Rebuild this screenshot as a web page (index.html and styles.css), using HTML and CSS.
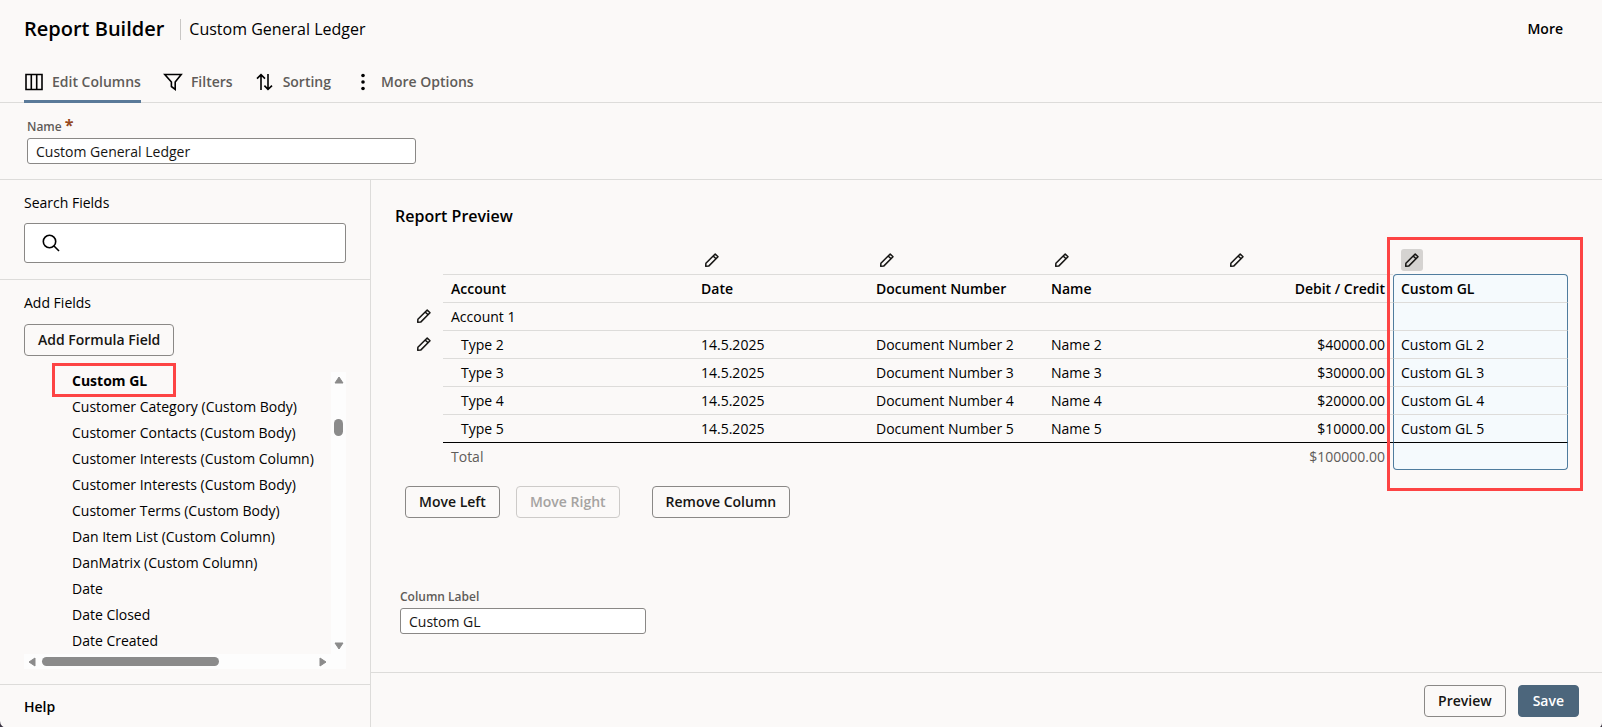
FILE: index.html
```html
<!DOCTYPE html>
<html lang="en">
<head>
    <meta charset="UTF-8">
    <meta name="viewport" content="width=device-width, initial-scale=1.0">
    <title>Report Builder</title>
    <link rel="stylesheet" href="styles.css">
</head>
<body>

    <!-- shared icon shapes -->
    <svg class="sprite" aria-hidden="true">
        <symbol id="pencil" viewBox="0 0 16 16">
            <path d="M1.7 14.3 1.9 11.3 11.2 2 14 4.8 4.7 14.1ZM9.2 4 12 6.8"/>
        </symbol>
    </svg>

    <div class="app">
        <header class="titlebar">
            <h1>Report Builder</h1>
            <span class="subtitle">Custom General Ledger</span>
            <a href="#" class="more">More</a>
        </header>

        <nav class="tabs">
            <a href="#" class="tab active">
                <svg viewBox="0 0 20 20"><path d="M2 2.5H18V17.5H2ZM7.3 2.5V17.5M12.7 2.5V17.5"/></svg>
                Edit Columns
            </a>
            <a href="#" class="tab">
                <svg viewBox="0 0 20 20"><path d="M1.8 2.5H18.2L12.2 10V17.3L8.4 14.5V10Z"/></svg>
                Filters
            </a>
            <a href="#" class="tab">
                <svg viewBox="0 0 20 20"><path d="M6 18V2.6M2 6.6 6 2.6 10 6.6M13 2V17.4M9.4 13.6 13 17.4 17 13.6"/></svg>
                Sorting
            </a>
            <a href="#" class="tab">
                <svg viewBox="0 0 20 20" class="dots"><circle cx="10" cy="3.5" r="1.8"/><circle cx="10" cy="10" r="1.8"/><circle cx="10" cy="16.5" r="1.8"/></svg>
                More Options
            </a>
        </nav>

        <div class="report-name">
            <label for="reportName">Name <span class="required">*</span></label>
            <input type="text" id="reportName" class="text-input" value="Custom General Ledger">
        </div>

        <div class="workspace">
            <aside class="sidebar">
                <section class="search">
                    <label for="searchFields">Search Fields</label>
                    <div class="search-box">
                        <svg viewBox="0 0 20 20"><circle cx="8.5" cy="8.5" r="6.2"/><path d="M13 13 18 18"/></svg>
                        <input type="text" id="searchFields">
                    </div>
                </section>

                <section class="fields">
                    <h2>Add Fields</h2>
                    <button type="button" class="btn">Add Formula Field</button>
                    <div class="field-panel">
                        <ul class="field-list">
                            <li class="selected">Custom GL</li>
                            <li>Customer Category (Custom Body)</li>
                            <li>Customer Contacts (Custom Body)</li>
                            <li>Customer Interests (Custom Column)</li>
                            <li>Customer Interests (Custom Body)</li>
                            <li>Customer Terms (Custom Body)</li>
                            <li>Dan Item List (Custom Column)</li>
                            <li>DanMatrix (Custom Column)</li>
                            <li>Date</li>
                            <li>Date Closed</li>
                            <li>Date Created</li>
                        </ul>
                        <div class="scroll-v">
                            <svg viewBox="0 0 10 8"><path d="M5 1 9 7H1Z"/></svg>
                            <span class="thumb"></span>
                            <svg viewBox="0 0 10 8"><path d="M5 7 1 1H9Z"/></svg>
                        </div>
                        <div class="scroll-h">
                            <svg viewBox="0 0 8 10"><path d="M1 5 7 1V9Z"/></svg>
                            <span class="thumb"></span>
                            <svg viewBox="0 0 8 10"><path d="M7 5 1 1V9Z"/></svg>
                        </div>
                        <span class="callout callout-field"></span>
                    </div>
                </section>

                <a href="#" class="help">Help</a>
            </aside>

            <main class="content">
                <div class="preview">
                    <h2>Report Preview</h2>

                    <div class="table-wrap">
                        <table>
                            <colgroup>
                                <col class="col-tools">
                                <col class="col-account">
                                <col><col><col><col><col>
                            </colgroup>
                            <thead>
                                <tr class="tools">
                                    <td></td>
                                    <td></td>
                                    <td><button type="button" class="edit" aria-label="Edit Date"><svg><use href="#pencil"/></svg></button></td>
                                    <td><button type="button" class="edit" aria-label="Edit Document Number"><svg><use href="#pencil"/></svg></button></td>
                                    <td><button type="button" class="edit" aria-label="Edit Name"><svg><use href="#pencil"/></svg></button></td>
                                    <td><button type="button" class="edit" aria-label="Edit Debit / Credit"><svg><use href="#pencil"/></svg></button></td>
                                    <td><button type="button" class="edit pressed" aria-label="Edit Custom GL"><svg><use href="#pencil"/></svg></button></td>
                                </tr>
                                <tr>
                                    <td class="row-tool"></td>
                                    <th>Account</th>
                                    <th>Date</th>
                                    <th>Document Number</th>
                                    <th>Name</th>
                                    <th class="amount">Debit / Credit</th>
                                    <th class="picked">Custom GL</th>
                                </tr>
                            </thead>
                            <tbody>
                                <tr>
                                    <td class="row-tool"><button type="button" class="edit" aria-label="Edit group"><svg><use href="#pencil"/></svg></button></td>
                                    <td>Account 1</td>
                                    <td></td>
                                    <td></td>
                                    <td></td>
                                    <td></td>
                                    <td class="picked"></td>
                                </tr>
                                <tr>
                                    <td class="row-tool"><button type="button" class="edit" aria-label="Edit rows"><svg><use href="#pencil"/></svg></button></td>
                                    <td class="indent">Type 2</td>
                                    <td>14.5.2025</td>
                                    <td>Document Number 2</td>
                                    <td>Name 2</td>
                                    <td class="amount">$40000.00</td>
                                    <td class="picked">Custom GL 2</td>
                                </tr>
                                <tr>
                                    <td class="row-tool"></td>
                                    <td class="indent">Type 3</td>
                                    <td>14.5.2025</td>
                                    <td>Document Number 3</td>
                                    <td>Name 3</td>
                                    <td class="amount">$30000.00</td>
                                    <td class="picked">Custom GL 3</td>
                                </tr>
                                <tr>
                                    <td class="row-tool"></td>
                                    <td class="indent">Type 4</td>
                                    <td>14.5.2025</td>
                                    <td>Document Number 4</td>
                                    <td>Name 4</td>
                                    <td class="amount">$20000.00</td>
                                    <td class="picked">Custom GL 4</td>
                                </tr>
                                <tr>
                                    <td class="row-tool"></td>
                                    <td class="indent">Type 5</td>
                                    <td>14.5.2025</td>
                                    <td>Document Number 5</td>
                                    <td>Name 5</td>
                                    <td class="amount">$10000.00</td>
                                    <td class="picked">Custom GL 5</td>
                                </tr>
                            </tbody>
                            <tfoot>
                                <tr>
                                    <td class="row-tool"></td>
                                    <td>Total</td>
                                    <td></td>
                                    <td></td>
                                    <td></td>
                                    <td class="amount">$100000.00</td>
                                    <td class="picked"></td>
                                </tr>
                            </tfoot>
                        </table>
                        <span class="callout callout-column"></span>
                    </div>

                    <div class="column-actions">
                        <button type="button" class="btn">Move Left</button>
                        <button type="button" class="btn" disabled>Move Right</button>
                        <button type="button" class="btn remove">Remove Column</button>
                    </div>

                    <div class="column-label">
                        <label for="columnLabel">Column Label</label>
                        <input type="text" id="columnLabel" class="text-input" value="Custom GL">
                    </div>
                </div>

                <footer class="footer">
                    <button type="button" class="btn">Preview</button>
                    <button type="button" class="btn primary">Save</button>
                </footer>
            </main>
        </div>
    </div>

</body>
</html>
```
FILE: styles.css
```css
* {
    box-sizing: border-box;
}
body {
    margin: 0;
    background: #3a3442;
    color: #000;
    font-family: "Open Sans", "Noto Sans", sans-serif;
    font-size: 14px;
    line-height: 20px;
}
h1, h2 {
    margin: 0;
}
a {
    color: inherit;
    text-decoration: none;
}
button, input {
    font: inherit;
    color: #161513;
}
svg {
    display: block;
    fill: none;
    stroke: #000;
}
.sprite {
    display: none;
}
.app {
    display: flex;
    flex-direction: column;
    min-height: 100vh;
    background: #fbf9f8;
    border-radius: 0 0 5px 7px;
}

/* header */
.titlebar {
    display: flex;
    align-items: center;
    height: 58px;
    padding: 0 39px 0 24px;
}
.titlebar h1 {
    font-size: 20px;
    line-height: 28px;
    font-weight: 600;
}
.subtitle {
    margin-left: 16px;
    padding-left: 8px;
    border-left: 1px solid #c9c7c5;
    font-size: 16px;
    line-height: 21px;
}
.more {
    margin-left: auto;
    font-weight: 600;
}
.tabs {
    display: flex;
    gap: 22px;
    height: 45px;
    padding: 0 24px;
    border-bottom: 1px solid #dddcda;
}
.tab {
    display: flex;
    align-items: center;
    gap: 8px;
    height: 45px;
    padding-top: 5px;
    border-bottom: 3px solid transparent;
    color: #5f5c59;
    font-weight: 600;
}
.tab.active {
    border-bottom-color: #5a7a99;
}
.tab svg {
    width: 20px;
    height: 20px;
    stroke-width: 1.6;
}
.tab .dots {
    fill: #000;
    stroke: none;
}
.report-name {
    padding: 14px 27px 15px;
    border-bottom: 1px solid #dddcda;
}
.report-name label, .column-label label {
    display: block;
    margin-bottom: 1px;
    color: #5f5c59;
    font-size: 12px;
    font-weight: 600;
}
.required {
    color: #95481d;
    font-size: 16px;
    font-weight: 700;
    line-height: 12px;
}
.text-input {
    display: block;
    width: 246px;
    height: 26px;
    padding: 1px 8px 0;
    background: #fff;
    border: 1px solid #8a8886;
    border-radius: 3px;
}
.report-name .text-input {
    width: 389px;
}

/* sidebar */
.workspace {
    display: grid;
    grid-template-columns: 371px 1fr;
    flex: 1;
}
.sidebar {
    display: flex;
    flex-direction: column;
    border-right: 1px solid #dddcda;
}
.search {
    padding: 13px 24px 16px;
    border-bottom: 1px solid #dddcda;
}
.search label, .fields h2 {
    display: block;
    font-size: 14px;
    font-weight: 500;
    line-height: 20px;
}
.search-box {
    display: flex;
    align-items: center;
    height: 40px;
    margin-top: 10px;
    padding-left: 16px;
    background: #fff;
    border: 1px solid #8a8886;
    border-radius: 3px;
}
.search-box svg {
    width: 20px;
    height: 20px;
    stroke-width: 1.6;
}
.search-box input {
    flex: 1;
    min-width: 0;
    margin: 0 8px;
    border: 0;
    background: none;
}
.fields {
    flex: 1;
    padding: 13px 24px 15px;
}
.btn {
    height: 32px;
    padding: 0 13px;
    background: transparent;
    border: 1px solid #8a8886;
    border-radius: 4px;
    font-weight: 600;
    cursor: pointer;
}
.btn:disabled {
    color: #a5a3a1;
    border-color: #cdcbc9;
    cursor: default;
}
.btn.primary {
    padding: 0 14px;
    background: #4c667c;
    border-color: #4c667c;
    color: #fff;
}
.fields .btn {
    margin-top: 11px;
}
.field-panel {
    position: relative;
    display: grid;
    grid-template-columns: 1fr 15px;
    grid-template-rows: auto 15px;
    margin-top: 12px;
}
.field-list {
    margin: 0;
    padding: 0 0 0 48px;
    list-style: none;
    white-space: nowrap;
    overflow: hidden;
}
.field-list li {
    line-height: 26px;
}
.field-list .selected {
    font-weight: 700;
}
.scroll-v, .scroll-h {
    display: flex;
    align-items: center;
    background: #fdfdfd;
}
.scroll-v {
    flex-direction: column;
    justify-content: space-between;
    margin-top: 4px;
    padding: 4px 0;
}
.scroll-h {
    grid-column: 1 / 3;
    padding: 0 19px 0 4px;
}
.scroll-v svg {
    width: 10px;
    height: 8px;
}
.scroll-h svg {
    width: 8px;
    height: 10px;
}
.scroll-v svg, .scroll-h svg {
    fill: #8b8b8b;
    stroke: #8b8b8b;
    stroke-linejoin: round;
}
.thumb {
    background: #8b8b8b;
    border-radius: 5px;
}
.scroll-v .thumb {
    width: 9px;
    height: 17px;
    margin: 35px 0 auto;
}
.scroll-h .thumb {
    width: 177px;
    height: 9px;
    margin: 0 auto 0 6px;
}
.help {
    padding: 12px 24px 11px;
    border-top: 1px solid #dddcda;
    font-weight: 600;
}

/* red highlight frames */
.callout {
    position: absolute;
    border: 3px solid #fd4444;
    pointer-events: none;
}
.callout-field {
    left: 28px;
    top: -5px;
    width: 124px;
    height: 34px;
}
.callout-column {
    top: -8px;
    right: -15px;
    bottom: -21px;
    width: calc((100% - 298px) / 5 + 21px);
}

/* report preview */
.content {
    display: flex;
    flex-direction: column;
    min-width: 0;
}
.preview {
    flex: 1;
    padding: 24px 34px 24px 24px;
}
.preview h2 {
    font-size: 16px;
    font-weight: 600;
    line-height: 24px;
}
.table-wrap {
    position: relative;
    margin-top: 17px;
}
table {
    width: 100%;
    table-layout: fixed;
    border-collapse: separate;
    border-spacing: 0;
}
.col-tools {
    width: 48px;
}
.col-account {
    width: 250px;
}
th, td {
    height: 28px;
    padding: 0 8px;
    border-top: 1px solid #dddcda;
    text-align: left;
    white-space: nowrap;
}
th {
    font-weight: 600;
}
.tools td {
    height: 29px;
    border: 0;
}
.row-tool {
    padding: 0 18px;
    border: 0;
}
.indent {
    padding-left: 18px;
}
.amount {
    text-align: right;
}
tfoot td {
    color: #5f5c59;
    border-top-color: #000;
}
.picked {
    background: #f5fafd;
    border-left: 1px solid #4f7c9e;
    border-right: 1px solid #4f7c9e;
    padding: 0 7px;
}
th.picked {
    border-top-color: #4f7c9e;
    border-radius: 4px 4px 0 0;
}
tfoot .picked {
    border-bottom: 1px solid #4f7c9e;
    border-radius: 0 0 4px 4px;
}
.edit {
    display: flex;
    align-items: center;
    justify-content: center;
    width: 22px;
    height: 22px;
    padding: 0;
    background: transparent;
    border: 0;
    border-radius: 3px;
    cursor: pointer;
}
.edit.pressed {
    background: #d5d3d1;
}
.edit svg {
    width: 16px;
    height: 16px;
    stroke: #161513;
    stroke-width: 1.5;
    stroke-linejoin: round;
}
.column-actions {
    display: flex;
    gap: 16px;
    margin: 16px 0 0 10px;
}
.remove {
    margin-left: 16px;
}
.column-label {
    margin: 69px 0 0 5px;
}

.footer {
    display: flex;
    justify-content: flex-end;
    gap: 12px;
    padding: 12px 23px 11px;
    border-top: 1px solid #dddcda;
}
```
